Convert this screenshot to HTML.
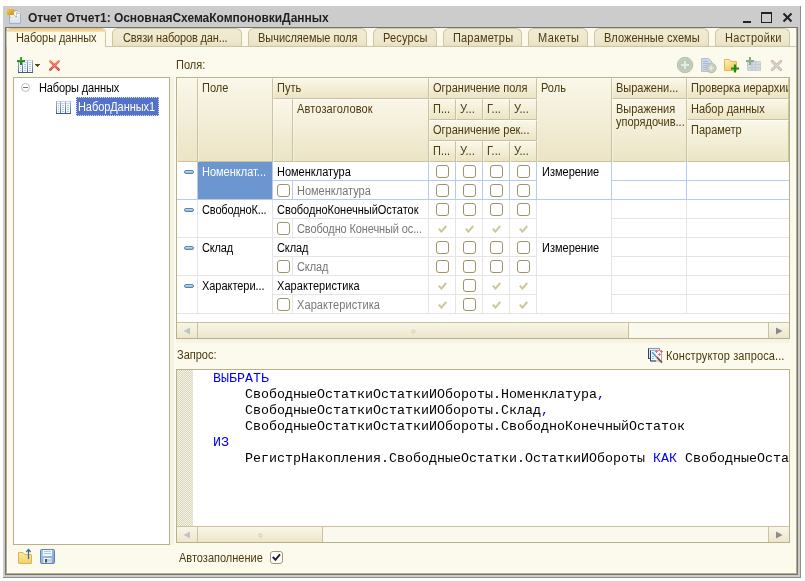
<!DOCTYPE html>
<html lang="ru">
<head>
<meta charset="utf-8">
<title>Отчет Отчет1: ОсновнаяСхемаКомпоновкиДанных</title>
<style>
html,body{margin:0;padding:0;background:#fff;}
body{will-change:transform;width:805px;height:581px;position:relative;overflow:hidden;font-family:"Liberation Sans",sans-serif;font-size:11px;color:#000;}
div,svg,span.a{position:absolute;box-sizing:border-box;}
.t{white-space:nowrap;line-height:13px;font-size:12px;color:#4a3a0c;transform:scaleX(0.9167);transform-origin:0 0;}
.k{color:#000;}
.g{color:#777;}
.w{color:#fff;}
#title{left:28px;top:11px;font-weight:bold;font-size:12px;line-height:14px;white-space:nowrap;color:#1e1e1e;letter-spacing:-0.04px;}
.tab{top:28px;height:18px;background:linear-gradient(#f1ebd4 0%,#eee7cd 75%,#e6dfc0 100%);border:1px solid #cdc6a2;border-bottom:none;border-radius:6px 6px 0 0;}
.tab .t{top:3px;left:10px;}
.box{background:#fff;border:1px solid #b8b088;}
.hc{background:linear-gradient(#faf7e9,#ebe4c5);border-right:1px solid #c9c29c;border-bottom:1px solid #c9c29c;border-left:1px solid rgba(255,255,255,0.4);border-top:1px solid #fdfcf5;overflow:hidden;}
.hc .t{left:3px;top:3px;}
.vl{width:1px;background:#e4e4e4;}
.hl{height:1px;background:#e4e4e4;}
.bl{background:#b4cbee;}
.cb{width:13px;height:13px;border:1.5px solid #9d9369;border-radius:3px;background:#fff;}
.code{font-family:"Liberation Mono",monospace;font-size:13.33px;line-height:16px;white-space:pre;color:#000;transform:scaleY(0.93);transform-origin:0 0;}
.code b{font-weight:normal;color:#0000f0;}
</style>
</head>
<body>
<div style="left:3px;top:6px;width:798px;height:572px;background:#cccccc;"></div>
<div style="left:800px;top:6px;width:1px;height:572px;background:#8e8e8e;"></div>
<div style="left:3px;top:577px;width:798px;height:1px;background:#8e8e8e;"></div>
<div style="left:5px;top:27px;width:793px;height:548px;background:#747474;"></div>
<div style="left:6px;top:28px;width:791px;height:546px;background:#b7ae80;"></div>
<div style="left:7px;top:28px;width:789px;height:545px;background:#fffef6;"></div>
<div style="left:8px;top:28px;width:788px;height:544px;background:#fcfaec;"></div>
<svg style="left:6px;top:8px" width="17" height="17" viewBox="0 0 17 17">
<defs><linearGradient id="dg" x1="0" y1="0" x2="0" y2="1"><stop offset="0" stop-color="#ffffff"/><stop offset="1" stop-color="#cfe0f0"/></linearGradient>
<linearGradient id="og" x1="0" y1="0" x2="1" y2="1"><stop offset="0" stop-color="#f4cc4a"/><stop offset="1" stop-color="#c98f1e"/></linearGradient></defs>
<path d="M3.5 2.5 H11.5 L14.5 5.5 V15.5 H3.5 Z" fill="url(#dg)" stroke="#9db3c9"/>
<path d="M11.5 2.5 V5.5 H14.5" fill="#eef4fa" stroke="#b5c6d8" stroke-width="0.8"/>
<path d="M4.5 9.5 H13.5" stroke="#dbe7f2"/>
<rect x="1" y="1" width="7" height="6" rx="0.8" fill="url(#og)"/>
<path d="M3 7 L4.5 9.5 M8 3 L10.5 4.5 M8 7 L10.5 9.5 M10.5 4.500 L10.5 9.5" stroke="#d9a030" stroke-width="1" stroke-dasharray="1 0.8" fill="none"/>
</svg>
<div id="title">Отчет Отчет1: ОсновнаяСхемаКомпоновкиДанных</div>
<div style="left:743px;top:21px;width:8px;height:2px;background:#222;"></div>
<div style="left:761px;top:12px;width:11px;height:11px;border:1px solid #222;border-top:2px solid #222;"></div>
<svg style="left:782px;top:12px" width="11" height="11" viewBox="0 0 11 11"><path d="M1.5 1.5 L9.5 9.5 M9.5 1.5 L1.5 9.5" stroke="#222" stroke-width="2.1"/></svg>
<div style="left:7px;top:46px;width:789px;height:1px;background:#cdc6a2;"></div>
<div class="tab" style="left:112px;width:130px"><div class="t" style="left:10px;letter-spacing:-0.16px">Связи наборов дан...</div></div>
<div class="tab" style="left:248px;width:119px"><div class="t" style="left:9px;letter-spacing:-0.03px">Вычисляемые поля</div></div>
<div class="tab" style="left:373px;width:64px"><div class="t" style="left:9px;letter-spacing:0.17px">Ресурсы</div></div>
<div class="tab" style="left:443px;width:79px"><div class="t" style="left:9px;letter-spacing:0.19px">Параметры</div></div>
<div class="tab" style="left:528px;width:60px"><div class="t" style="left:9px;letter-spacing:0.42px">Макеты</div></div>
<div class="tab" style="left:594px;width:115px"><div class="t" style="left:9px;letter-spacing:0.04px">Вложенные схемы</div></div>
<div class="tab" style="left:715px;width:75px"><div class="t" style="left:9px;letter-spacing:0.35px">Настройки</div></div>
<div style="left:6px;top:28px;width:100px;height:19px;background:#fcfaec;border:1px solid #cdc6a2;border-bottom:none;border-radius:5px 5px 0 0;overflow:hidden"><div style="left:0;top:0;width:100px;height:3px;background:linear-gradient(#f7c878,#fbe3b5)"></div><div class="t" style="left:9px;top:3px;letter-spacing:-0.1px">Наборы данных</div></div>
<svg style="left:18px;top:60px" width="15" height="13" viewBox="0 0 15 13" shape-rendering="crispEdges"><defs><linearGradient id="tig1" x1="0" y1="0" x2="0" y2="1"><stop offset="0" stop-color="#a9bcd8"/><stop offset="1" stop-color="#4c668e"/></linearGradient></defs><rect x="0" y="0" width="15" height="13" fill="url(#tig1)"/><rect x="1" y="0" width="13" height="3" fill="#c9d7ea"/><rect x="1" y="1" width="3" height="1" fill="#fff"/><rect x="5" y="1" width="4" height="1" fill="#fff"/><rect x="10" y="1" width="4" height="1" fill="#fff"/><rect x="1" y="3" width="3" height="9" fill="#f6faff"/><rect x="5" y="3" width="4" height="9" fill="#f6faff"/><rect x="10" y="3" width="4" height="9" fill="#f6faff"/><rect x="4" y="0" width="1" height="12" fill="url(#tig1)"/><rect x="9" y="0" width="1" height="12" fill="url(#tig1)"/><path d="M2 4.5 H3 M2 6.5 H3 M2 8.5 H3 M2 10.5 H3 M6 4.5 H8 M6 6.5 H8 M6 8.5 H8 M6 10.5 H8 M11 4.5 H13 M11 6.5 H13 M11 8.5 H13 M11 10.5 H13" stroke="#b4c2d6" stroke-width="1"/><rect x="0" y="12" width="15" height="1" fill="#3f5980"/></svg>
<svg style="left:17px;top:57px" width="8" height="8" viewBox="0 0 8 8" shape-rendering="crispEdges"><defs><linearGradient id="pg" x1="0" y1="0" x2="0" y2="1"><stop offset="0" stop-color="#3db52a"/><stop offset="1" stop-color="#1c7a10"/></linearGradient></defs><rect x="3" y="0" width="2" height="8" fill="url(#pg)"/><rect x="0" y="3" width="8" height="2" fill="url(#pg)"/></svg>
<svg style="left:35px;top:64px" width="5" height="3" viewBox="0 0 5 3" shape-rendering="crispEdges"><rect x="0" y="0" width="5" height="1" fill="#5a4612"/><rect x="1" y="1" width="3" height="1" fill="#5a4612"/><rect x="2" y="2" width="1" height="1" fill="#5a4612"/></svg>
<svg style="left:48px;top:59px" width="13" height="13" viewBox="0 0 13 13"><defs><linearGradient id="xg" x1="0" y1="0" x2="0" y2="13" gradientUnits="userSpaceOnUse"><stop offset="0.15" stop-color="#f67a5e"/><stop offset="0.9" stop-color="#c9353a"/></linearGradient></defs><path d="M2.3 2.3 L10.7 10.7 M10.7 2.3 L2.3 10.7" stroke="url(#xg)" stroke-width="2.5" stroke-linecap="round"/><path d="M2.5 2.5 L10.5 10.5 M10.5 2.5 L2.5 10.5" stroke="#f3a08e" stroke-width="0.7" stroke-linecap="round" stroke-dasharray="1 0.7"/></svg>
<div style="left:170px;top:77px;width:4px;height:468px;background:#f6f3e3;"></div>
<div style="left:176px;top:339px;width:614px;height:4px;background:#f6f3e3;"></div>
<div class="box" style="left:13px;top:77px;width:157px;height:468px;"></div>
<svg style="left:21px;top:83px" width="9" height="9" viewBox="0 0 9 9"><circle cx="4.5" cy="4.5" r="4" fill="#fff" stroke="#bcbcbc" stroke-width="1"/><rect x="2" y="4" width="5" height="1" fill="#777" shape-rendering="crispEdges"/></svg>
<div class="t k" style="left:39px;top:82px;letter-spacing:-0.13px">Наборы данных</div>
<svg style="left:56px;top:101px" width="15" height="13" viewBox="0 0 15 13" shape-rendering="crispEdges"><defs><linearGradient id="tig2" x1="0" y1="0" x2="0" y2="1"><stop offset="0" stop-color="#a9bcd8"/><stop offset="1" stop-color="#4c668e"/></linearGradient></defs><rect x="0" y="0" width="15" height="13" fill="url(#tig2)"/><rect x="1" y="0" width="13" height="3" fill="#c9d7ea"/><rect x="1" y="1" width="3" height="1" fill="#fff"/><rect x="5" y="1" width="4" height="1" fill="#fff"/><rect x="10" y="1" width="4" height="1" fill="#fff"/><rect x="1" y="3" width="3" height="9" fill="#f6faff"/><rect x="5" y="3" width="4" height="9" fill="#f6faff"/><rect x="10" y="3" width="4" height="9" fill="#f6faff"/><rect x="4" y="0" width="1" height="12" fill="url(#tig2)"/><rect x="9" y="0" width="1" height="12" fill="url(#tig2)"/><path d="M2 4.5 H3 M2 6.5 H3 M2 8.5 H3 M2 10.5 H3 M6 4.5 H8 M6 6.5 H8 M6 8.5 H8 M6 10.5 H8 M11 4.5 H13 M11 6.5 H13 M11 8.5 H13 M11 10.5 H13" stroke="#b4c2d6" stroke-width="1"/><rect x="0" y="12" width="15" height="1" fill="#3f5980"/></svg>
<div style="left:76px;top:97px;width:83px;height:19px;background:#5572c9;border:1px dotted #d8e0f8;"></div>
<div class="t w" style="left:78px;top:101px;letter-spacing:-0.08px">НаборДанных1</div>
<div class="t" style="left:176px;top:59px;">Поля:</div>
<div class="box" style="left:176px;top:77px;width:614px;height:262px;"></div>
<div class="hc" style="left:177px;top:78px;width:21px;height:84px"></div>
<div class="hc" style="left:198px;top:78px;width:75px;height:84px"><div class="t" style="">Поле</div></div>
<div class="hc" style="left:273px;top:78px;width:156px;height:21px"><div class="t" style="">Путь</div></div>
<div class="hc" style="left:273px;top:99px;width:20px;height:63px"></div>
<div class="hc" style="left:293px;top:99px;width:136px;height:63px"><div class="t" style="letter-spacing:0.15px">Автозаголовок</div></div>
<div class="hc" style="left:429px;top:78px;width:108px;height:21px"><div class="t" style="">Ограничение поля</div></div>
<div class="hc" style="left:429px;top:99px;width:27px;height:21px"><div class="t" style="">П...</div></div>
<div class="hc" style="left:456px;top:99px;width:27px;height:21px"><div class="t" style="">У...</div></div>
<div class="hc" style="left:483px;top:99px;width:27px;height:21px"><div class="t" style="">Г...</div></div>
<div class="hc" style="left:510px;top:99px;width:27px;height:21px"><div class="t" style="">У...</div></div>
<div class="hc" style="left:429px;top:120px;width:108px;height:21px"><div class="t" style="">Ограничение рек...</div></div>
<div class="hc" style="left:429px;top:141px;width:27px;height:21px"><div class="t" style="">П...</div></div>
<div class="hc" style="left:456px;top:141px;width:27px;height:21px"><div class="t" style="">У...</div></div>
<div class="hc" style="left:483px;top:141px;width:27px;height:21px"><div class="t" style="">Г...</div></div>
<div class="hc" style="left:510px;top:141px;width:27px;height:21px"><div class="t" style="">У...</div></div>
<div class="hc" style="left:537px;top:78px;width:75px;height:84px"><div class="t" style="">Роль</div></div>
<div class="hc" style="left:612px;top:78px;width:75px;height:21px"><div class="t" style="">Выражени...</div></div>
<div class="hc" style="left:612px;top:99px;width:75px;height:63px"><div class="t" style="">Выражения<br>упорядочив...</div></div>
<div class="hc" style="left:687px;top:78px;width:102px;height:21px"><div class="t" style="">Проверка иерархии</div></div>
<div class="hc" style="left:687px;top:99px;width:102px;height:21px"><div class="t" style="">Набор данных</div></div>
<div class="hc" style="left:687px;top:120px;width:102px;height:42px"><div class="t" style="">Параметр</div></div>
<div class="vl" style="left:197px;top:162px;height:152px"></div>
<div class="vl" style="left:272px;top:162px;height:152px"></div>
<div class="vl" style="left:428px;top:162px;height:152px"></div>
<div class="vl" style="left:455px;top:162px;height:152px"></div>
<div class="vl" style="left:482px;top:162px;height:152px"></div>
<div class="vl" style="left:509px;top:162px;height:152px"></div>
<div class="vl" style="left:536px;top:162px;height:152px"></div>
<div class="vl" style="left:611px;top:162px;height:152px"></div>
<div class="vl" style="left:686px;top:162px;height:152px"></div>
<div class="vl" style="left:292px;top:181px;height:19px"></div>
<div class="hl" style="top:180px;left:273px;width:264px"></div>
<div class="hl" style="top:180px;left:612px;width:177px"></div>
<div class="hl" style="top:199px;left:177px;width:612px"></div>
<div class="vl" style="left:292px;top:219px;height:19px"></div>
<div class="hl" style="top:218px;left:273px;width:264px"></div>
<div class="hl" style="top:218px;left:612px;width:177px"></div>
<div class="hl" style="top:237px;left:177px;width:612px"></div>
<div class="vl" style="left:292px;top:257px;height:19px"></div>
<div class="hl" style="top:256px;left:273px;width:264px"></div>
<div class="hl" style="top:256px;left:612px;width:177px"></div>
<div class="hl" style="top:275px;left:177px;width:612px"></div>
<div class="vl" style="left:292px;top:295px;height:19px"></div>
<div class="hl" style="top:294px;left:273px;width:264px"></div>
<div class="hl" style="top:294px;left:612px;width:177px"></div>
<div class="hl" style="top:313px;left:177px;width:612px"></div>
<div class="vl bl" style="left:197px;top:162px;height:38px"></div>
<div class="vl bl" style="left:272px;top:162px;height:38px"></div>
<div class="vl bl" style="left:428px;top:162px;height:38px"></div>
<div class="vl bl" style="left:455px;top:162px;height:38px"></div>
<div class="vl bl" style="left:482px;top:162px;height:38px"></div>
<div class="vl bl" style="left:509px;top:162px;height:38px"></div>
<div class="vl bl" style="left:536px;top:162px;height:38px"></div>
<div class="vl bl" style="left:611px;top:162px;height:38px"></div>
<div class="vl bl" style="left:686px;top:162px;height:38px"></div>
<div class="vl bl" style="left:292px;top:181px;height:19px"></div>
<div class="hl bl" style="top:180px;left:273px;width:264px"></div>
<div class="hl bl" style="top:180px;left:612px;width:177px"></div>
<div class="hl bl" style="top:199px;left:177px;width:612px"></div>
<div style="left:198px;top:162px;width:74px;height:37px;background:#6b96d0;"></div>
<div style="left:184px;top:170px;width:10px;height:4px;border-radius:2px;background:linear-gradient(#c9e1f6,#86b0d6);border:1px solid #5a84aa"></div>
<div class="t w" style="left:202px;top:166px;">Номенклат...</div>
<div class="t k" style="left:277px;top:166px;">Номенклатура</div>
<div class="cb" style="left:277px;top:184px"></div>
<div class="t g" style="left:297px;top:185px;">Номенклатура</div>
<div class="cb" style="left:436px;top:165px"></div>
<div class="cb" style="left:463px;top:165px"></div>
<div class="cb" style="left:490px;top:165px"></div>
<div class="cb" style="left:517px;top:165px"></div>
<div class="cb" style="left:436px;top:184px"></div>
<div class="cb" style="left:463px;top:184px"></div>
<div class="cb" style="left:490px;top:184px"></div>
<div class="cb" style="left:517px;top:184px"></div>
<div class="t k" style="left:542px;top:166px;">Измерение</div>
<div style="left:184px;top:208px;width:10px;height:4px;border-radius:2px;background:linear-gradient(#c9e1f6,#86b0d6);border:1px solid #5a84aa"></div>
<div class="t k" style="left:202px;top:204px;letter-spacing:-0.15px">СвободноК...</div>
<div class="t k" style="left:277px;top:204px;">СвободноКонечныйОстаток</div>
<div class="cb" style="left:277px;top:222px"></div>
<div class="t g" style="left:297px;top:223px;letter-spacing:-0.13px">Свободно Конечный ос...</div>
<div class="cb" style="left:436px;top:203px"></div>
<div class="cb" style="left:463px;top:203px"></div>
<div class="cb" style="left:490px;top:203px"></div>
<div class="cb" style="left:517px;top:203px"></div>
<svg style="left:438px;top:225px" width="9" height="8" viewBox="0 0 9 8"><path d="M0.8 3.6 L3.4 6.6 L8.2 1" fill="none" stroke="#cdc59c" stroke-width="2"/></svg>
<svg style="left:465px;top:225px" width="9" height="8" viewBox="0 0 9 8"><path d="M0.8 3.6 L3.4 6.6 L8.2 1" fill="none" stroke="#cdc59c" stroke-width="2"/></svg>
<svg style="left:492px;top:225px" width="9" height="8" viewBox="0 0 9 8"><path d="M0.8 3.6 L3.4 6.6 L8.2 1" fill="none" stroke="#cdc59c" stroke-width="2"/></svg>
<svg style="left:519px;top:225px" width="9" height="8" viewBox="0 0 9 8"><path d="M0.8 3.6 L3.4 6.6 L8.2 1" fill="none" stroke="#cdc59c" stroke-width="2"/></svg>
<div style="left:184px;top:246px;width:10px;height:4px;border-radius:2px;background:linear-gradient(#c9e1f6,#86b0d6);border:1px solid #5a84aa"></div>
<div class="t k" style="left:202px;top:242px;letter-spacing:-0.2px">Склад</div>
<div class="t k" style="left:277px;top:242px;letter-spacing:-0.1px">Склад</div>
<div class="cb" style="left:277px;top:260px"></div>
<div class="t g" style="left:297px;top:261px;letter-spacing:-0.1px">Склад</div>
<div class="cb" style="left:436px;top:241px"></div>
<div class="cb" style="left:463px;top:241px"></div>
<div class="cb" style="left:490px;top:241px"></div>
<div class="cb" style="left:517px;top:241px"></div>
<div class="cb" style="left:436px;top:260px"></div>
<div class="cb" style="left:463px;top:260px"></div>
<div class="cb" style="left:490px;top:260px"></div>
<div class="cb" style="left:517px;top:260px"></div>
<div class="t k" style="left:542px;top:242px;">Измерение</div>
<div style="left:184px;top:284px;width:10px;height:4px;border-radius:2px;background:linear-gradient(#c9e1f6,#86b0d6);border:1px solid #5a84aa"></div>
<div class="t k" style="left:202px;top:280px;letter-spacing:-0.05px">Характери...</div>
<div class="t k" style="left:277px;top:280px;letter-spacing:0.07px">Характеристика</div>
<div class="cb" style="left:277px;top:298px"></div>
<div class="t g" style="left:297px;top:299px;letter-spacing:0.1px">Характеристика</div>
<svg style="left:438px;top:282px" width="9" height="8" viewBox="0 0 9 8"><path d="M0.8 3.6 L3.4 6.6 L8.2 1" fill="none" stroke="#cdc59c" stroke-width="2"/></svg>
<div class="cb" style="left:463px;top:279px"></div>
<svg style="left:492px;top:282px" width="9" height="8" viewBox="0 0 9 8"><path d="M0.8 3.6 L3.4 6.6 L8.2 1" fill="none" stroke="#cdc59c" stroke-width="2"/></svg>
<svg style="left:519px;top:282px" width="9" height="8" viewBox="0 0 9 8"><path d="M0.8 3.6 L3.4 6.6 L8.2 1" fill="none" stroke="#cdc59c" stroke-width="2"/></svg>
<svg style="left:438px;top:301px" width="9" height="8" viewBox="0 0 9 8"><path d="M0.8 3.6 L3.4 6.6 L8.2 1" fill="none" stroke="#cdc59c" stroke-width="2"/></svg>
<div class="cb" style="left:463px;top:298px"></div>
<svg style="left:492px;top:301px" width="9" height="8" viewBox="0 0 9 8"><path d="M0.8 3.6 L3.4 6.6 L8.2 1" fill="none" stroke="#cdc59c" stroke-width="2"/></svg>
<svg style="left:519px;top:301px" width="9" height="8" viewBox="0 0 9 8"><path d="M0.8 3.6 L3.4 6.6 L8.2 1" fill="none" stroke="#cdc59c" stroke-width="2"/></svg>
<div style="left:177px;top:322px;width:612px;height:16px;background:#fbf9ee;border-top:1px solid #c9c29c;"></div>
<div style="left:177px;top:323px;width:21px;height:15px;background:linear-gradient(#f9f6e8,#ece6cb);border-right:1px solid #c9c29c;"></div>
<div style="left:198px;top:323px;width:431px;height:15px;background:linear-gradient(#f9f6e8,#ece6cb);border-right:1px solid #c9c29c;"></div>
<div style="left:768px;top:323px;width:21px;height:15px;background:linear-gradient(#f9f6e8,#ece6cb);border-left:1px solid #c9c29c;"></div>
<svg style="left:183px;top:327px" width="8" height="8" viewBox="0 0 8 8"><path d="M7 0.5 V7.5 L0.5 4 Z" fill="#c4c4c4"/></svg>
<svg style="left:775px;top:327px" width="8" height="8" viewBox="0 0 8 8"><path d="M1 0.5 V7.5 L7.5 4 Z" fill="#8c8c8c"/></svg>
<svg style="left:411px;top:329px" width="5" height="5" viewBox="0 0 5 5"><circle cx="2.5" cy="2.5" r="1.6" fill="none" stroke="#cfc8a6" stroke-width="1"/></svg>
<div class="t" style="left:177px;top:349px;">Запрос:</div>
<svg style="left:647px;top:347px" width="17" height="17" viewBox="0 0 17 17"><rect x="1.5" y="1.5" width="11" height="10" fill="#dfeaf6" stroke="#8096b6"/><path d="M1.5 1.5 V11.5 H4" stroke="#2c4063" fill="none"/><rect x="3.5" y="3.5" width="11" height="10.5" fill="#eef7fd" stroke="#9fb0c8"/><path d="M3.5 3.5 V14 H9" stroke="#2c4063" fill="none"/><path d="M5 9.5 H7 M5 11.5 H7" stroke="#a8b8cc"/><path d="M9.5 3 V6 M8 4.5 H11 M14.5 3 V6 M13 4.5 H16 M12.5 6 V9 M11 7.5 H14" stroke="#ff6a5a" stroke-width="1"/><path d="M5.2 5.2 L9.8 10.2" stroke="#4d9ad6" stroke-width="1.6"/><path d="M9.8 10.2 L15 15.6" stroke="#8a4a22" stroke-width="1.7"/></svg>
<div class="t" style="left:666px;top:350px;letter-spacing:0.13px">Конструктор запроса...</div>
<div class="box" style="left:176px;top:369px;width:614px;height:174px;overflow:hidden;"></div>
<svg style="left:177px;top:370px" width="16" height="156"><defs><pattern id="hp" width="2" height="2" patternUnits="userSpaceOnUse"><rect width="2" height="2" fill="#f4f2e2"/><rect width="1" height="1" fill="#dbd7be"/><rect x="1" y="1" width="1" height="1" fill="#dbd7be"/></pattern></defs><rect width="16" height="157" fill="url(#hp)"/></svg>
<div class="code" style="left:213px;top:372px"><b>ВЫБРАТЬ</b></div>
<div class="code" style="left:245px;top:388px">СвободныеОстаткиОстаткиИОбороты.Номенклатура<b>,</b></div>
<div class="code" style="left:245px;top:404px">СвободныеОстаткиОстаткиИОбороты.Склад<b>,</b></div>
<div class="code" style="left:245px;top:420px">СвободныеОстаткиОстаткиИОбороты.СвободноКонечныйОстаток</div>
<div class="code" style="left:213px;top:436px"><b>ИЗ</b></div>
<div class="code" style="left:245px;top:452px">РегистрНакопления.СвободныеОстатки.ОстаткиИОбороты <b>КАК</b> СвободныеОста</div>
<div style="left:177px;top:526px;width:612px;height:16px;background:#fbf9ee;border-top:1px solid #c9c29c;"></div>
<div style="left:177px;top:527px;width:21px;height:15px;background:linear-gradient(#f9f6e8,#ece6cb);border-right:1px solid #c9c29c;"></div>
<div style="left:198px;top:527px;width:125px;height:15px;background:linear-gradient(#f9f6e8,#ece6cb);border-right:1px solid #c9c29c;"></div>
<div style="left:768px;top:527px;width:21px;height:15px;background:linear-gradient(#f9f6e8,#ece6cb);border-left:1px solid #c9c29c;"></div>
<svg style="left:183px;top:531px" width="8" height="8" viewBox="0 0 8 8"><path d="M7 0.5 V7.5 L0.5 4 Z" fill="#c4c4c4"/></svg>
<svg style="left:775px;top:531px" width="8" height="8" viewBox="0 0 8 8"><path d="M1 0.5 V7.5 L7.5 4 Z" fill="#8c8c8c"/></svg>
<svg style="left:258px;top:533px" width="5" height="5" viewBox="0 0 5 5"><circle cx="2.5" cy="2.5" r="1.6" fill="none" stroke="#cfc8a6" stroke-width="1"/></svg>
<svg style="left:17px;top:548px" width="17" height="17" viewBox="0 0 17 17"><defs><linearGradient id="fg2" x1="0" y1="0" x2="0" y2="1"><stop offset="0" stop-color="#fbeaa0"/><stop offset="1" stop-color="#f3cf68"/></linearGradient></defs><path d="M1.5 5 Q1.5 4.5 2 4.5 H6 L7.5 6.5 H14 Q14.5 6.5 14.5 7 V15 Q14.5 15.5 14 15.5 H2 Q1.5 15.5 1.5 15 Z" fill="url(#fg2)" stroke="#dcb553"/><path d="M11.5 11 V2" stroke="#3d6a94" stroke-width="1.2"/><path d="M9.3 4 L11.5 1.4 L13.7 4" fill="none" stroke="#3d6a94" stroke-width="1.2"/></svg>
<svg style="left:40px;top:549px" width="15" height="15" viewBox="0 0 15 15"><defs><linearGradient id="flg" x1="0" y1="0" x2="1" y2="1"><stop offset="0" stop-color="#a9c8ea"/><stop offset="1" stop-color="#7fa6d2"/></linearGradient></defs><rect x="0.5" y="0.5" width="14" height="14" rx="1.2" fill="url(#flg)" stroke="#5d82ad"/><rect x="3" y="1" width="9" height="6" fill="#f0f6fc"/><path d="M4 2.5 H11 M4 4.5 H11" stroke="#a9c7e6" stroke-width="1"/><rect x="3.5" y="9" width="8" height="5" fill="#f4f4f4"/><rect x="5" y="10" width="2.2" height="3.5" fill="#35537c"/><rect x="8" y="10" width="3" height="3.5" fill="#d0d0d0"/></svg>
<div class="t" style="left:179px;top:552px;">Автозаполнение</div>
<div style="left:270px;top:551px;width:13px;height:13px;border:1.5px solid #a39a74;border-radius:3px;background:#fff;"></div>
<svg style="left:272px;top:553px" width="9" height="9" viewBox="0 0 9 9"><path d="M0.8 3.8 L3.4 6.8 L8 1.4" fill="none" stroke="#1e1e2a" stroke-width="2"/></svg>
<svg style="left:676px;top:56px" width="18" height="18" viewBox="0 0 18 18"><circle cx="9" cy="9" r="7.7" fill="#c3cfbf" stroke="#b4c0b0" stroke-width="1"/><circle cx="9" cy="9" r="5.8" fill="#bdcab9"/><path d="M9 5 V13 M5 9 H13" stroke="#e6e9e4" stroke-width="2"/></svg>
<svg style="left:700px;top:57px" width="17" height="17" viewBox="0 0 17 17"><path d="M1.5 1.5 H8.5 L12 5 V14.5 H1.5 Z" fill="#ced8e8" stroke="#b3c0d8"/><path d="M3 4.5 H8 M3 6.5 H9 M3 8.5 H7 M3 10.5 H6 M3 12.5 H6" stroke="#a9bad6"/><circle cx="11.3" cy="11" r="4.8" fill="#c3cfbf" stroke="#b4c0b0"/><path d="M11.3 8.6 V13.4 M8.9 11 H13.7" stroke="#e6e9e4" stroke-width="1.6"/></svg>
<svg style="left:723px;top:57px" width="17" height="17" viewBox="0 0 17 17"><defs><linearGradient id="fg" x1="0" y1="0" x2="0.6" y2="1"><stop offset="0" stop-color="#fdf3c0"/><stop offset="1" stop-color="#f1c75a"/></linearGradient></defs><path d="M1.5 2.5 H6.5 L8 4.5 H13.5 V13.5 H1.5 Z" fill="url(#fg)" stroke="#dcb85a" stroke-linejoin="round"/><path d="M12 7.5 V15.5 M8 11.5 H16" stroke="#1e8a12" stroke-width="2.2"/></svg>
<svg style="left:746px;top:57px" width="16" height="15" viewBox="0 0 16 15"><rect x="1" y="4" width="14" height="10" rx="1.5" fill="#c5ccd3"/><path d="M2 6.2 H5 M2 9.2 H5 M2 12 H5 M6.8 6.2 H8.8 M6.8 9.2 H8.8 M6.8 12 H8.8 M10.3 6.2 H14 M10.3 9.2 H14 M10.3 12 H14" stroke="#d8dde1" stroke-width="1.7"/><path d="M4 0 V8 M0 4 H8" stroke="#8faa8a" stroke-width="2"/></svg>
<svg style="left:770px;top:59px" width="13" height="13" viewBox="0 0 13 13"><path d="M2.2 2.2 L10.8 10.8 M10.8 2.2 L2.2 10.8" stroke="#c4b4b2" stroke-width="2.7" stroke-linecap="round"/><path d="M2.4 2.4 L10.6 10.6 M10.6 2.4 L2.4 10.6" stroke="#e2dad4" stroke-width="1.1" stroke-linecap="round"/></svg>
</body>
</html>
